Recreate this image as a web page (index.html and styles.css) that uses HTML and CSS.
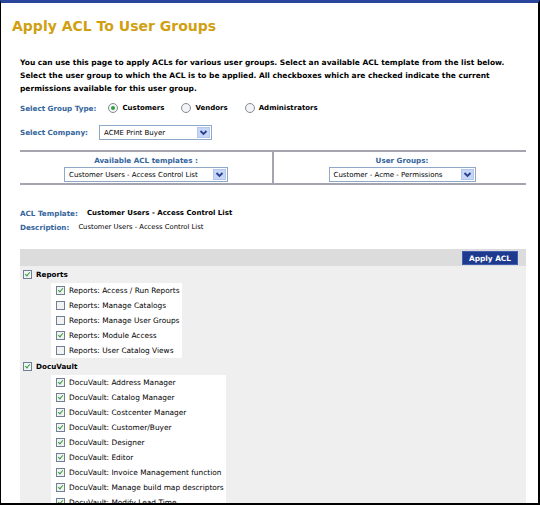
FILE: index.html
```html
<!DOCTYPE html>
<html>
<head>
<meta charset="utf-8">
<link rel="stylesheet" href="styles.css">
</head>
<body>
<div class="frame">
  <h1 class="title">Apply ACL To User Groups</h1>
  <div class="content">
    <p class="intro">You can use this page to apply ACLs for various user groups. Select an available ACL template from the list below. Select the user group to which the ACL is to be applied. All checkboxes which are checked indicate the current permissions available for this user group.</p>

    <div class="row group-type">
      <span class="label">Select Group Type:</span>
      <span class="radio on"></span><span class="opt">Customers</span>
      <span class="radio"></span><span class="opt">Vendors</span>
      <span class="radio"></span><span class="opt">Administrators</span>
    </div>

    <div class="row company">
      <span class="label">Select Company:</span>
      <div class="select sel-company"><span class="sel-text">ACME Print Buyer</span><span class="arrow"><svg width="9" height="9" viewBox="0 0 9 9"><path d="M1.5 3 L4.5 6 L7.5 3" fill="none" stroke="#2b3f8f" stroke-width="1.8"/></svg></span></div>
    </div>

    <div class="pickers">
      <div class="picker">
        <div class="label">Available ACL templates :</div>
        <div class="select sel-template"><span class="sel-text">Customer Users - Access Control List</span><span class="arrow"><svg width="9" height="9" viewBox="0 0 9 9"><path d="M1.5 3 L4.5 6 L7.5 3" fill="none" stroke="#2b3f8f" stroke-width="1.8"/></svg></span></div>
      </div>
      <div class="picker right">
        <div class="label">User Groups:</div>
        <div class="select sel-group"><span class="sel-text">Customer - Acme - Permissions</span><span class="arrow"><svg width="9" height="9" viewBox="0 0 9 9"><path d="M1.5 3 L4.5 6 L7.5 3" fill="none" stroke="#2b3f8f" stroke-width="1.8"/></svg></span></div>
      </div>
    </div>

    <div class="meta">
      <div class="meta-row"><span class="label">ACL Template:</span><span class="strong">Customer Users - Access Control List</span></div>
      <div class="meta-row"><span class="label">Description:</span><span class="plain">Customer Users - Access Control List</span></div>
    </div>

    <div class="panel">
      <div class="panel-head"><span class="btn">Apply ACL</span></div>

      <div class="cat"><span class="cb on"></span><span class="cat-name">Reports</span></div>
      <div class="items">
        <div class="item"><span class="cb on"></span>Reports: Access / Run Reports</div>
        <div class="item"><span class="cb"></span>Reports: Manage Catalogs</div>
        <div class="item"><span class="cb"></span>Reports: Manage User Groups</div>
        <div class="item"><span class="cb on"></span>Reports: Module Access</div>
        <div class="item"><span class="cb"></span>Reports: User Catalog Views</div>
      </div>

      <div class="cat"><span class="cb on"></span><span class="cat-name">DocuVault</span></div>
      <div class="items">
        <div class="item"><span class="cb on"></span>DocuVault: Address Manager</div>
        <div class="item"><span class="cb on"></span>DocuVault: Catalog Manager</div>
        <div class="item"><span class="cb on"></span>DocuVault: Costcenter Manager</div>
        <div class="item"><span class="cb on"></span>DocuVault: Customer/Buyer</div>
        <div class="item"><span class="cb on"></span>DocuVault: Designer</div>
        <div class="item"><span class="cb on"></span>DocuVault: Editor</div>
        <div class="item"><span class="cb on"></span>DocuVault: Invoice Management function</div>
        <div class="item"><span class="cb on"></span>DocuVault: Manage build map descriptors</div>
        <div class="item"><span class="cb on"></span>DocuVault: Modify Lead Time</div>
      </div>
    </div>
  </div>
</div>
</body>
</html>
```

FILE: styles.css
```css
html, body {
  margin: 0;
  padding: 0;
  background: #ffffff;
}

.frame {
  width: 540px;
  height: 505px;
  box-sizing: border-box;
  border-top: 3px solid #2a469c;
  border-left: 1px solid #000;
  border-right: 2px solid #000;
  border-bottom: 2px solid #000;
  overflow: hidden;
  font-family: "DejaVu Sans", Verdana, sans-serif;
  color: #000;
}

.title {
  margin: 0;
  padding: 13px 0 0 11px;
  height: 20px;
  line-height: 20px;
  font-size: 14px;
  font-weight: bold;
  color: #d19f12;
}

.content {
  padding: 0 12px 0 19px;
}

.intro {
  margin: 20px 0 0 0;
  font-size: 7.5px;
  line-height: 13px;
  font-weight: bold;
  max-width: 492px;
}

.label {
  color: #34659c;
  font-weight: bold;
  font-size: 7.2px;
}

.row {
  display: flex;
  align-items: center;
}

.group-type {
  margin-top: 6px;
  height: 14px;
}

.group-type .label {
  margin-right: 12px;
}

.radio {
  width: 10px;
  height: 10px;
  box-sizing: border-box;
  border: 1px solid #7f8a9a;
  border-radius: 50%;
  background: #f4f4f4;
  margin-right: 4px;
  display: flex;
  align-items: center;
  justify-content: center;
}

.radio.on::after {
  content: "";
  width: 4px;
  height: 4px;
  border-radius: 50%;
  background: #2fa23a;
}

.opt {
  font-size: 7px;
  font-weight: bold;
  margin-right: 17px;
}

.company {
  margin-top: 10px;
  height: 15px;
}

.company .label {
  margin-right: 11px;
}

.select {
  height: 15px;
  box-sizing: border-box;
  border: 1px solid #8fa8c8;
  background: #fff;
  display: flex;
  align-items: center;
  justify-content: space-between;
  padding: 0 1px 0 4px;
}

.sel-text {
  font-size: 7px;
}

.arrow {
  width: 13px;
  height: 11px;
  background: #c6d6f6;
  border: 1px solid #b3c6ee;
  box-sizing: border-box;
  display: flex;
  align-items: center;
  justify-content: center;
}

.sel-company { width: 113px; }
.sel-template { width: 164px; }
.sel-group { width: 147px; }

.pickers {
  margin-top: 10px;
  display: flex;
  border-top: 2px solid #a5a5b0;
  border-bottom: 2px solid #a5a5b0;
  height: 31px;
}

.picker {
  flex: 0 0 254px;
  display: flex;
  flex-direction: column;
  align-items: center;
  padding-top: 4px;
  box-sizing: border-box;
  border-right: 2px solid #a5a5b0;
}

.picker.right {
  flex: 1 1 auto;
  border-right: none;
  padding-left: 4px;
}

.picker .label {
  font-size: 7.2px;
  line-height: 9px;
  margin-bottom: 2px;
}

.meta {
  margin-top: 21px;
}

.meta-row {
  display: flex;
  align-items: center;
  height: 14px;
}

.meta-row .label {
  margin-right: 9px;
}

.strong {
  font-weight: bold;
  font-size: 7px;
}

.plain {
  font-size: 6.8px;
}

.panel {
  margin-top: 15px;
  background: #efefef;
  height: 260px;
}

.panel-head {
  height: 17px;
  background: #dcdcdc;
  display: flex;
  align-items: center;
  justify-content: flex-end;
  padding-right: 8px;
}

.btn {
  background: #1d3a8e;
  color: #fff;
  font-weight: bold;
  font-size: 7.4px;
  height: 14px;
  line-height: 14px;
  padding: 0 6px;
  box-sizing: border-box;
  border: 1px solid #3e5db0;
}

.cat {
  display: flex;
  align-items: center;
  height: 17px;
  padding-left: 3px;
}

.cat-name {
  font-weight: bold;
  font-size: 7.2px;
}

.cb {
  width: 9px;
  height: 9px;
  box-sizing: border-box;
  border: 1px solid #6f7f96;
  background: #f2f2f2;
  margin-right: 4px;
  flex: 0 0 auto;
  position: relative;
}

.cb.on::after {
  content: "";
  position: absolute;
  left: 2px;
  top: 0px;
  width: 2px;
  height: 4px;
  border-right: 1.5px solid #2fa23a;
  border-bottom: 1.5px solid #2fa23a;
  transform: rotate(40deg);
}

.items {
  margin-left: 31px;
  background: #fff;
  display: flex;
  width: fit-content;
  flex-direction: column;
  padding: 0 2px 0 5px;
}

.item {
  display: flex;
  align-items: center;
  height: 15px;
  font-size: 7.4px;
  white-space: nowrap;
}
```
